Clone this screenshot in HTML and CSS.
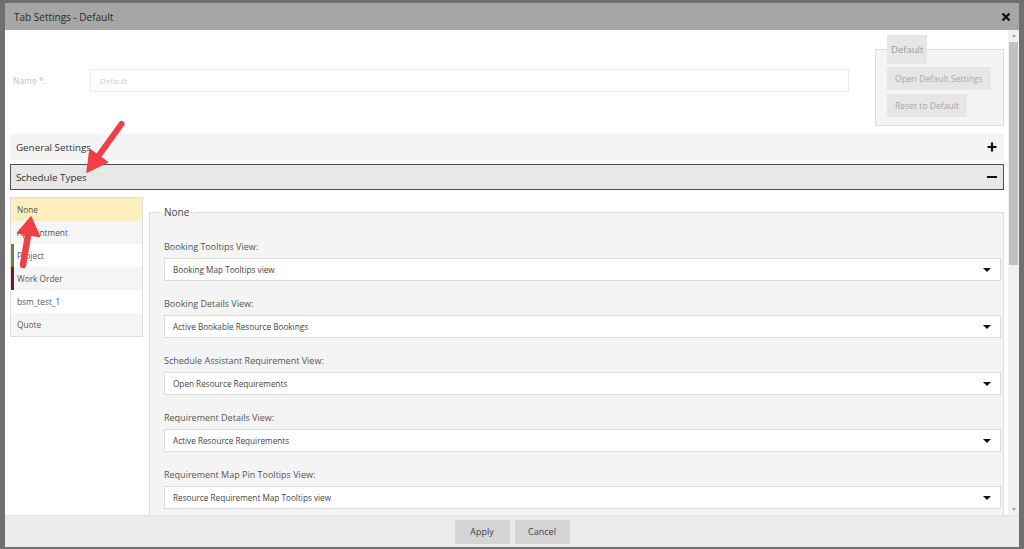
FILE: index.html
```html
<!DOCTYPE html>
<html lang="en">
<head>
    <meta charset="UTF-8">
    <title>Tab Settings - Default</title>
    <link rel="stylesheet" href="styles.css">
</head>
<body>
    <div class="screen">
        <div class="dialog">
            <div class="titlebar">
                <span class="title">Tab Settings - Default</span>
                <svg class="close" width="10" height="10" viewBox="0 0 10 10"><path d="M1.5 1.5 L8.5 8.5 M8.5 1.5 L1.5 8.5" stroke="#111" stroke-width="2.4"/></svg>
            </div>

            <div class="dialog-body">
                <div class="content">
                    <div class="top">
                        <div class="name-row">
                            <label class="name-label">Name <span class="req">*</span>:</label>
                            <div class="name-input">Default</div>
                        </div>
                        <fieldset class="defaults">
                            <legend>Default</legend>
                            <button class="btn-light">Open Default Settings</button>
                            <button class="btn-light">Reset to Default</button>
                        </fieldset>
                    </div>

                    <div class="bar">
                        <span>General Settings</span>
                        <svg width="10" height="10" viewBox="0 0 10 10"><path d="M5 0.5 V9.5 M0.5 5 H9.5" stroke="#111" stroke-width="2.2"/></svg>
                    </div>
                    <div class="bar bar-open">
                        <span>Schedule Types</span>
                        <svg width="10" height="10" viewBox="0 0 10 10"><path d="M0 5 H10" stroke="#111" stroke-width="2"/></svg>
                    </div>

                    <div class="types">
                        <ul class="type-list">
                            <li class="selected">None</li>
                            <li class="alt">Appointment</li>
                            <li class="mark-green">Project</li>
                            <li class="alt mark-wine">Work Order</li>
                            <li>bsm_test_1</li>
                            <li class="alt">Quote</li>
                        </ul>

                        <fieldset class="type-panel">
                            <legend>None</legend>
                            <div class="field">
                                <div class="field-label">Booking Tooltips View:</div>
                                <div class="select"><span>Booking Map Tooltips view</span><i class="caret"></i></div>
                            </div>
                            <div class="field">
                                <div class="field-label">Booking Details View:</div>
                                <div class="select"><span>Active Bookable Resource Bookings</span><i class="caret"></i></div>
                            </div>
                            <div class="field">
                                <div class="field-label">Schedule Assistant Requirement View:</div>
                                <div class="select"><span>Open Resource Requirements</span><i class="caret"></i></div>
                            </div>
                            <div class="field">
                                <div class="field-label">Requirement Details View:</div>
                                <div class="select"><span>Active Resource Requirements</span><i class="caret"></i></div>
                            </div>
                            <div class="field">
                                <div class="field-label">Requirement Map Pin Tooltips View:</div>
                                <div class="select"><span>Resource Requirement Map Tooltips view</span><i class="caret"></i></div>
                            </div>
                        </fieldset>
                    </div>
                </div>

                <div class="scrollbar">
                    <i class="sb-up"></i>
                    <div class="sb-thumb"></div>
                    <i class="sb-down"></i>
                </div>
            </div>

            <div class="footer">
                <button class="btn">Apply</button>
                <button class="btn">Cancel</button>
            </div>
        </div>

        <!-- annotation arrows drawn over the screenshot -->
        <svg class="arrows" width="1024" height="549" viewBox="0 0 1024 549">
            <g fill="#ef4046" stroke="#ef4046" stroke-linejoin="round">
                <line x1="121.5" y1="124" x2="98.6" y2="155.8" stroke-width="6" stroke-linecap="round"/>
                <polygon points="87,172 107.5,162 90,149.5" stroke-width="1.5"/>
                <line x1="23" y1="265" x2="28.1" y2="234.8" stroke-width="6.5" stroke-linecap="round"/>
                <polygon points="31,217 39.5,236.6 17.5,233" stroke-width="1.5"/>
            </g>
        </svg>
    </div>
</body>
</html>
```

FILE: styles.css
```css
body {
    margin: 0;
    font-family: "Open Sans", "Noto Sans", sans-serif;
    background-color: #6f6f6f;
}
.screen {
    position: relative;
    width: 1024px;
    height: 549px;
    padding: 3px 5px 2px 5px;
    box-sizing: border-box;
    overflow: hidden;
}
.dialog {
    display: flex;
    flex-direction: column;
    height: 100%;
}

/* title bar */
.titlebar {
    flex: none;
    height: 27px;
    display: flex;
    align-items: center;
    justify-content: space-between;
    padding: 0 8px 0 9px;
    background-color: #a6a6a6;
}
.title {
    font-size: 10px;
    color: #2a2a2a;
}

/* body */
.dialog-body {
    flex: 1;
    display: flex;
    min-height: 0;
    background: white;
}
.content {
    flex: 1;
    min-width: 0;
    overflow: hidden;
    padding: 5px 4px 0 5px;
}
.top {
    display: flex;
    align-items: center;
    margin-bottom: 8px;
}
.name-row {
    flex: 1;
    display: flex;
    align-items: center;
    padding-left: 3px;
    margin-right: 26px;
}
.name-label {
    width: 77px;
    font-size: 8.5px;
    color: #c4c4c4;
}
.req {
    color: #f3a9a9;
}
.name-input {
    flex: 1;
    height: 23px;
    line-height: 21px;
    box-sizing: border-box;
    border: 1px solid #ececec;
    padding-left: 9px;
    font-size: 8px;
    color: #cfcfcf;
}
.defaults {
    flex: none;
    width: 129px;
    min-width: 0;
    box-sizing: border-box;
    margin: 0;
    padding: 3px 11px 8px 11px;
    border: 1px solid #dcdcdc;
    background-color: #f4f4f4;
}
.defaults legend {
    padding: 0 4px;
    height: 29px;
    line-height: 29px;
    font-size: 9.5px;
    color: #9a9a9a;
    background-color: #e6e6e6;
}
.btn-light {
    display: block;
    height: 23px;
    padding: 0 8px;
    border: none;
    white-space: nowrap;
    font-family: inherit;
    font-size: 8.6px;
    color: #a8a8a8;
    background-color: #e6e6e6;
}
.btn-light + .btn-light {
    margin-top: 4px;
}

/* accordion bars */
.bar {
    height: 26px;
    box-sizing: border-box;
    display: flex;
    align-items: center;
    justify-content: space-between;
    padding: 0 7px 0 6px;
    background-color: #f4f4f4;
    font-size: 9.8px;
    color: #333;
}
.bar + .bar {
    margin-top: 4px;
}
.bar-open {
    border: 1px solid #4e4e4e;
    padding: 0 6px 0 5px;
    background-color: #e8e8e8;
}

/* schedule types */
.types {
    display: flex;
    align-items: flex-start;
    gap: 6px;
    margin-top: 7px;
}
.type-list {
    flex: none;
    width: 133px;
    box-sizing: border-box;
    margin: 0;
    padding: 0;
    list-style: none;
    border: 1px solid #dedede;
}
.type-list li {
    height: 23px;
    line-height: 23px;
    padding-left: 6px;
    font-size: 8.3px;
    color: #555;
    background: white;
}
.type-list li.alt {
    background-color: #f5f5f5;
}
.type-list li.selected {
    background-color: #fdefbd;
}
.type-list li.mark-green {
    border-left: 3px solid #5d8b3a;
    padding-left: 3px;
}
.type-list li.mark-wine {
    border-left: 3px solid #6c1638;
    padding-left: 3px;
}
.type-panel {
    flex: 1;
    min-width: 0;
    margin: 7px 0 0 0;
    padding: 21px 2px 20px 14px;
    border: 1px solid #dedede;
    background-color: #f4f4f4;
}
.type-panel legend {
    margin-left: -4px;
    padding: 0 5px 0 4px;
    line-height: 16px;
    font-size: 10px;
    color: #444;
}
.field {
    margin-bottom: 17px;
}
.field-label {
    height: 12px;
    line-height: 12px;
    margin-bottom: 5px;
    font-size: 9px;
    color: #555;
}
.select {
    height: 23px;
    box-sizing: border-box;
    display: flex;
    align-items: center;
    justify-content: space-between;
    padding: 0 9px 0 8px;
    border: 1px solid #dcdcdc;
    background: white;
    font-size: 8.2px;
    color: #444;
}
.caret {
    width: 0;
    height: 0;
    border-left: 4px solid transparent;
    border-right: 4px solid transparent;
    border-top: 4px solid #111;
}

/* scrollbar */
.scrollbar {
    flex: none;
    width: 11px;
    display: flex;
    flex-direction: column;
    align-items: center;
    padding-top: 2px;
    box-sizing: border-box;
    background-color: #f1f1f1;
}
.sb-up, .sb-down {
    width: 0;
    height: 0;
    border-left: 2.5px solid transparent;
    border-right: 2.5px solid transparent;
}
.sb-up {
    border-bottom: 3px solid #a3a3a3;
    margin: 2px 0 5px;
}
.sb-down {
    border-top: 3px solid #a3a3a3;
    margin-top: auto;
    margin-bottom: 4px;
}
.sb-thumb {
    width: 9px;
    height: 223px;
    background-color: #c1c1c1;
}

/* footer */
.footer {
    flex: none;
    height: 32px;
    box-sizing: border-box;
    display: flex;
    align-items: center;
    justify-content: center;
    gap: 5px;
    border-top: 1px solid #e2e2e2;
    background-color: #ebebeb;
}
.btn {
    width: 55px;
    height: 24px;
    border: none;
    font-family: inherit;
    font-size: 9px;
    color: #444;
    background-color: #d4d4d4;
}

.arrows {
    position: absolute;
    left: 0;
    top: 0;
    pointer-events: none;
}
```
